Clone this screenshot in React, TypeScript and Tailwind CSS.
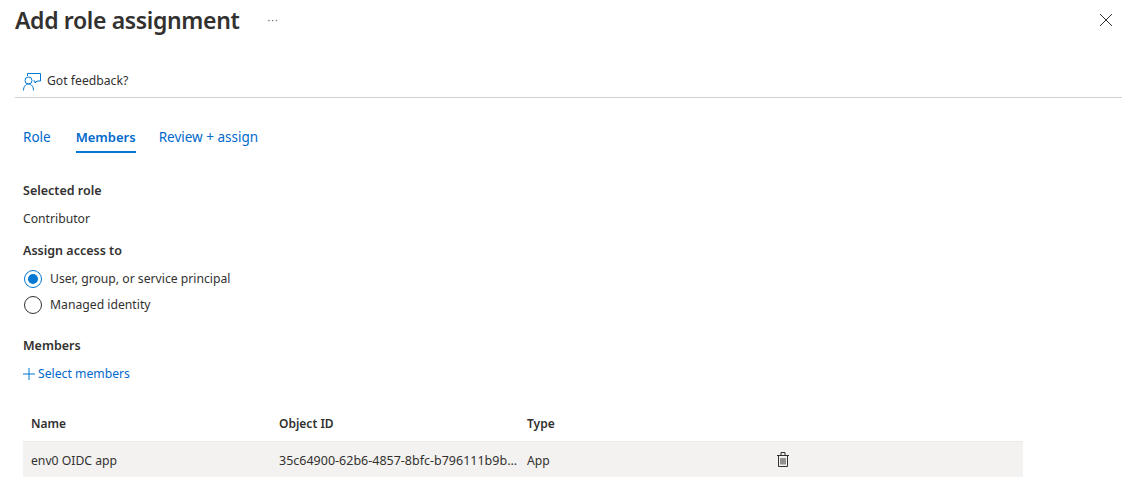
function Radio({ on, label }: { on?: boolean; label: string }) {
  return (
    <div className="flex h-[26px] items-center gap-[8px] pl-[1px]">
      <span className={`flex h-[18px] w-[18px] items-center justify-center rounded-full border ${on ? "border-[#0078d4]" : "border-[#323130]"}`}>
        {on && <span className="h-[10px] w-[10px] rounded-full bg-[#0078d4]" />}
      </span>
      <span className="text-[#323130]">{label}</span>
    </div>
  );
}

export default function App() {
  return (
    <div className="h-[491px] w-[1122px] overflow-hidden bg-white text-[12.2px] text-[#323130]" style={{ fontFamily: '"Noto Sans", "Open Sans", sans-serif' }}>
      <div className="flex h-[40px] items-center pl-[15px] pr-[9px]">
        <h1 className="text-[23px] font-semibold leading-[40px] tracking-[-0.35px] text-[#323130]">Add role assignment</h1>
        <span className="ml-[28px] text-[10px] leading-none tracking-[1px] text-[#605e5c]">···</span>
        <svg className="ml-auto" width="14" height="14" viewBox="0 0 14 14" fill="none" stroke="#323130" strokeWidth="1">
          <path d="M1 1l12 12M13 1L1 13" />
        </svg>
      </div>
      <div className="ml-[15px] flex h-[58px] items-center border-b border-[#d2d0ce] pl-[8px] pt-[26px]">
        <svg width="18" height="19" viewBox="0 0 18 19" fill="none" stroke="#0078d4" strokeWidth="1" className="mr-[6px]">
          <path d="M4.500 4V1.500h13V9h-3.500L12 11V9h-1.500" />
          <circle cx="5.500" cy="8.500" r="3.500" />
          <path d="M0.500 18.500c0-4 2.200-6.500 5-6.500s5 2.500 5 6.500" />
        </svg>
        <span>Got feedback?</span>
      </div>
      <div className="flex h-[56px] gap-[25px] pl-[23px] pt-[29px] text-[13.5px] text-[#0069cc]">
        <span>Role</span>
        <span className="h-[26px] border-b-2 border-[#0078d4] pt-[1px] text-[13px] font-semibold">Members</span>
        <span className="-ml-[2px]">Review + assign</span>
      </div>
      <div className="pl-[23px] pt-[27px]">
        <div className="h-[28px] text-[12.5px] font-semibold leading-[20px]">Selected role</div>
        <div className="h-[32px] leading-[20px]">Contributor</div>
        <div className="h-[25px] text-[12.5px] font-semibold leading-[20px]">Assign access to</div>
        <Radio on label="User, group, or service principal" />
        <Radio label="Managed identity" />
        <div className="box-content h-[24px] pt-[18px] text-[12.5px] font-semibold leading-[20px]">Members</div>
        <div className="flex h-[28px] items-center text-[#0069cc]">
          <svg width="12" height="12" viewBox="0 0 12 12" fill="none" stroke="#0078d4" strokeWidth="1" className="mr-[3px]">
            <path d="M6 0v12M0 6h12" />
          </svg>
          <span>Select members</span>
        </div>
      </div>
      <div className="ml-[23px] mt-[20px] w-[1000px]">
        <div className="flex h-[34px] items-center border-b border-[#edebe9] pb-[2px] pl-[8px] text-[12px] font-semibold">
          <div className="w-[248px]">Name</div>
          <div className="w-[248px]">Object ID</div>
          <div>Type</div>
        </div>
        <div className="flex h-[35px] items-center bg-[#f3f2f1] pl-[8px]">
          <div className="w-[248px] pt-[3px]">env0 OIDC app</div>
          <div className="w-[248px] truncate pr-[8px] pt-[3px] text-[12.5px]">35c64900-62b6-4857-8bfc-b796111b9b8e</div>
          <div className="w-[250px] pt-[3px]">App</div>
          <svg width="12" height="15" viewBox="0 0 12 15" fill="none" stroke="#323130" strokeWidth="1">
            <path d="M0 3.500h12M4 3.500V0.500h4v3M1.500 3.500v11h9v-11M4 6v6.500M6 6v6.500M8 6v6.500" />
          </svg>
        </div>
      </div>
    </div>
  );
}
